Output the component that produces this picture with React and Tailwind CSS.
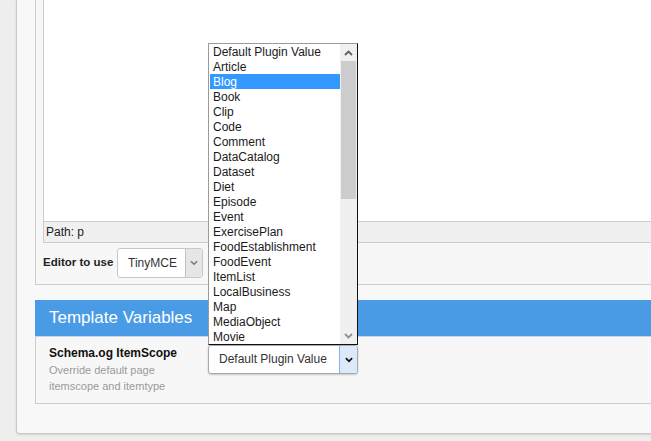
import React from "react";

const items = [
  "Default Plugin Value",
  "Article",
  "Blog",
  "Book",
  "Clip",
  "Code",
  "Comment",
  "DataCatalog",
  "Dataset",
  "Diet",
  "Episode",
  "Event",
  "ExercisePlan",
  "FoodEstablishment",
  "FoodEvent",
  "ItemList",
  "LocalBusiness",
  "Map",
  "MediaObject",
  "Movie",
];

function Chevron({ up = false, color = "#444", w = 9, h = 6, sw = 2 }) {
  return (
    <svg width={w} height={h} viewBox="0 0 9 6" fill="none">
      {up ? (
        <polyline points="1,5 4.5,1.5 8,5" stroke={color} strokeWidth={sw} />
      ) : (
        <polyline points="1,1 4.5,4.5 8,1" stroke={color} strokeWidth={sw} />
      )}
    </svg>
  );
}

export default function App() {
  return (
    <div
      className="relative w-[651px] h-[441px] overflow-hidden bg-[#eeeeee] text-[#222]"
      style={{ fontFamily: '"Liberation Sans", Arial, sans-serif' }}
    >
      {/* outer panel */}
      <div className="ml-[16px] bg-[#f8f8f8] border-l border-b border-[#c9c9c9] rounded-bl-[4px] pl-[18px] pb-[29px] shadow-[0_1px_2px_rgba(0,0,0,0.12)]">
        {/* editor fieldset */}
        <div className="bg-[#f7f7f7] border-l border-b border-[#cccccc] pl-[7px] pb-[6px]">
          <div className="border-l border-[#cccccc]">
            <div className="h-[222px] bg-white border-b border-[#cccccc]" />
            <div className="h-[21px] bg-[#f0f0f0] border-b border-[#cccccc] pl-[2px] text-[12px] leading-[20px] text-[#222]">
              Path: p
            </div>
          </div>
          <div className="mt-[5px] flex items-center h-[30px]">
            <span className="w-[74px] text-[11.5px] font-bold text-[#222] whitespace-nowrap">
              Editor to use
            </span>
            <div className="flex h-[30px] w-[86px] bg-white border border-[#c8c8c8] rounded-[3px] overflow-hidden">
              <span className="flex-1 pl-[10px] text-[12px] leading-[28px] text-[#333]">
                TinyMCE
              </span>
              <span className="w-[17px] bg-[#e6e6e6] border-l border-[#c2c2c2] flex items-center justify-center">
                <Chevron color="#777" w={8} h={6} sw={1.6} />
              </span>
            </div>
          </div>
        </div>

        {/* template variables */}
        <div className="mt-[15px]">
          <div className="h-[37px] bg-[#4a9be6] border-b border-[#c5d5e5] pl-[14px] text-white text-[17px] leading-[36px]">
            Template Variables
          </div>
          <div className="h-[67px] bg-[#f7f7f7] border-l border-b border-[#cccccc] pl-[13px] flex">
            <div className="w-[159px] pt-[9px]">
              <div className="text-[12px] leading-[14px] font-bold text-[#111] whitespace-nowrap">
                Schema.og ItemScope
              </div>
              <div className="mt-[2px] text-[11px] leading-[16px] text-[#9a9a9a]">
                Override default page
                <br />
                itemscope and itemtype
              </div>
            </div>
            <div className="pt-[8px]">
              <div className="flex h-[29px] w-[150px] bg-white border border-[#a9a9a9] rounded-[3px] shadow-[0_1px_2px_rgba(0,0,0,0.2)] overflow-hidden">
                <span className="flex-1 pl-[10px] text-[12px] leading-[27px] text-[#333] whitespace-nowrap">
                  Default Plugin Value
                </span>
                <span className="w-[18px] bg-[#dbe9fa] border-l border-[#86b3e6] flex items-center justify-center">
                  <Chevron color="#111" w={8} h={6} sw={2} />
                </span>
              </div>
            </div>
          </div>
        </div>
      </div>

      {/* open dropdown list */}
      <div className="absolute left-[208px] top-[43px] w-[150px] h-[302px] bg-white border-t border-l border-[#9a9a9a] border-r-[1px] border-b-[1px] border-r-[#111] border-b-[#111] flex">
        <div className="w-[131px] pl-[1px]">
          {items.map((it, i) => (
            <div
              key={it}
              className={
                "h-[15px] pl-[3px] text-[12px] leading-[16px] whitespace-nowrap " +
                (i === 2 ? "bg-[#3399ff] text-white" : "text-[#1a1a1a]")
              }
            >
              {it}
            </div>
          ))}
        </div>
        <div className="w-[17px] bg-[#f0f0f0] flex flex-col">
          <div className="h-[17px] flex items-center justify-center">
            <Chevron up color="#606060" w={9} h={6} sw={1.8} />
          </div>
          <div className="h-[138px] mx-[1px] bg-[#cdcdcd]" />
          <div className="flex-1" />
          <div className="h-[17px] flex items-center justify-center">
            <Chevron color="#909090" w={9} h={6} sw={1.8} />
          </div>
        </div>
      </div>
    </div>
  );
}
